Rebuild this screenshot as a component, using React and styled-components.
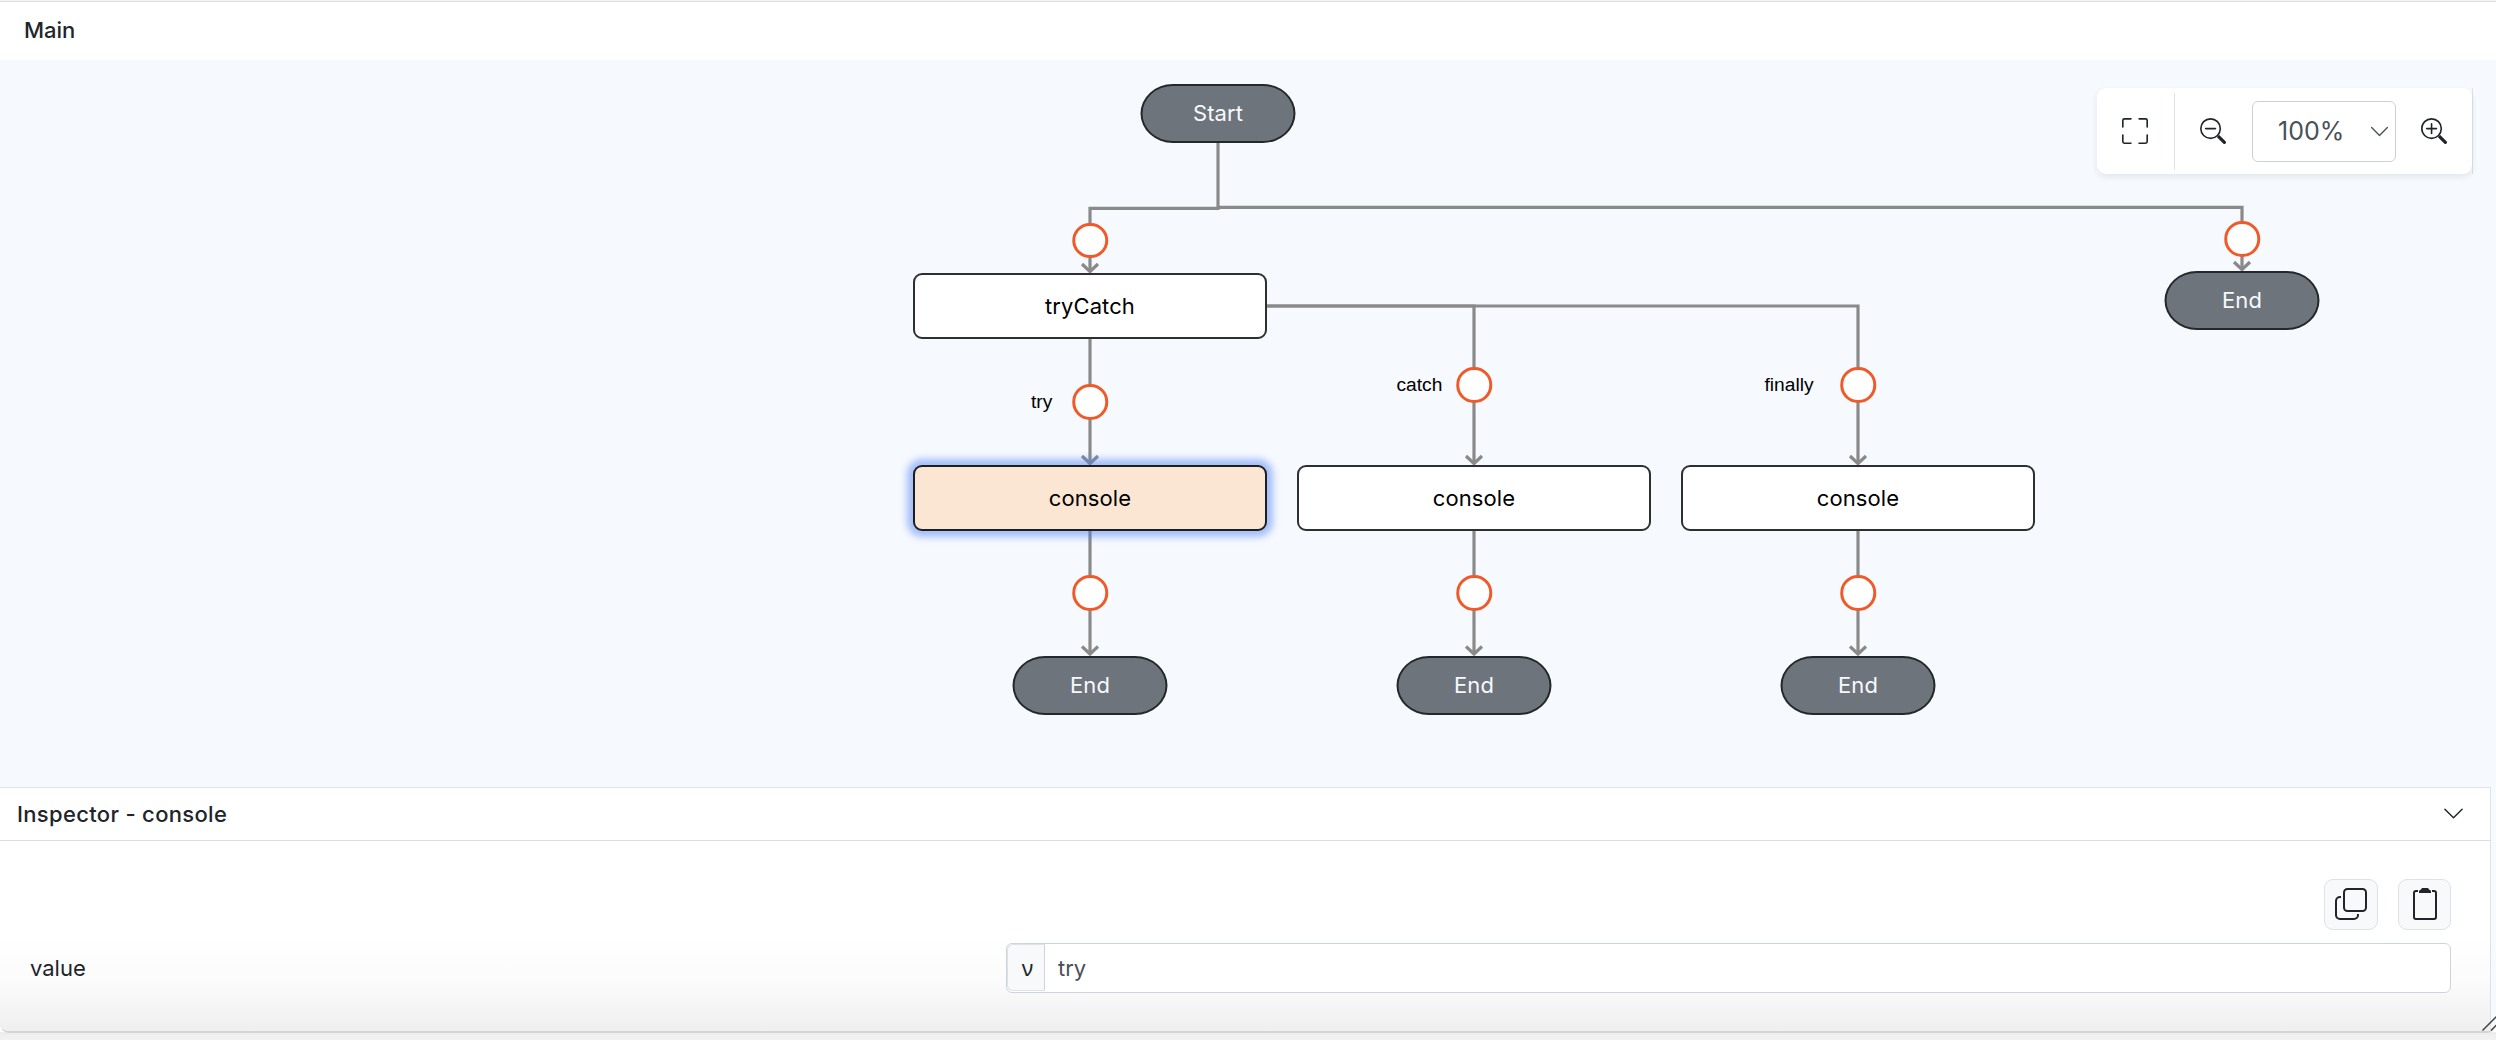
import React from "react";
import styled, { createGlobalStyle } from "styled-components";
import { BsFullscreen, BsZoomOut, BsZoomIn, BsChevronDown } from "react-icons/bs";

const GlobalStyle = createGlobalStyle`
  *, *::before, *::after { box-sizing: border-box; }
  html, body { margin: 0; background: #ededed; }
  body {
    font-family: Inter, "Liberation Sans", sans-serif;
    font-size: 22px;
    color: #212529;
    overflow: hidden;
  }
`;

const Window = styled.div`
  display: flex;
  flex-direction: column;
  width: 2496px;
  height: 1040px;
  background: linear-gradient(#ededed, #f2f2f2) bottom / 100% 8px no-repeat, #fff;
`;

const Frame = styled.div`
  display: flex;
  flex-direction: column;
  height: 1033px;
  border-top: 1px solid #f4f4f4;
  border-bottom: 2px solid #d4d4d4;
  border-radius: 0 0 9px 9px;
  background: #f6f9fe;
  overflow: hidden;
`;

const TitleBar = styled.header`
  flex: none;
  height: 59px;
  padding: 0 24px;
  border-top: 1px solid #dcdfdf;
  background: #fff;
  font-weight: 500;
  font-size: 22px;
  line-height: 56px;
`;

const Canvas = styled.main`
  position: relative;
  flex: none;
  height: 727px;
`;

const EdgeLayer = styled.svg`
  position: absolute;
  inset: 0;
  width: 2496px;
  height: 727px;
`;

const Node = styled.div`
  position: absolute;
  left: ${(p) => p.$x}px;
  top: ${(p) => p.$y}px;
  transform: translate(-50%, 0);
  display: flex;
  align-items: center;
  justify-content: center;
`;

const Terminal = styled(Node)`
  width: 155px;
  height: 59px;
  border: 2px solid #24282b;
  border-radius: 33px / 30px;
  background: #6d747c;
  color: #f6f9fe;
  padding-bottom: 1px;
  letter-spacing: 0.1px;
`;

const Step = styled(Node)`
  width: 354px;
  height: 66px;
  border: 2px solid ${(p) => (p.$selected ? "#1c1e20" : "#2c3033")};
  border-radius: 9px;
  background: ${(p) => (p.$selected ? "#fbe6d4" : "#fff")};
  color: #000;
  padding-bottom: 1px;
  letter-spacing: 0.1px;
  box-shadow: ${(p) => (p.$selected ? "0 0 7px 6px rgba(74, 125, 245, 0.48)" : "none")};
`;

const Port = styled(Node)`
  width: 35.5px;
  height: 35.5px;
  margin-top: -17.75px;
  border: 3px solid #f05a28;
  border-radius: 50%;
  background: #fff;
`;

const BranchLabel = styled.span`
  position: absolute;
  left: ${(p) => p.$x}px;
  top: ${(p) => p.$y}px;
  font: 19.2px/22px "Liberation Sans", Arial, sans-serif;
  color: #000;
`;

const Toolbar = styled.div`
  position: absolute;
  left: 2097px;
  top: 28px;
  display: flex;
  align-items: center;
  width: 376px;
  height: 86px;
  border-right: 1px solid #dee2e6;
  border-radius: 9px 0 0 9px;
`;

const ToolbarSurface = styled.div`
  display: flex;
  align-items: center;
  width: 375px;
  height: 86px;
  border-radius: 9px;
  background: #fff;
  box-shadow: 0 3px 6px rgba(33, 37, 41, 0.09);
`;

const ToolButton = styled.button`
  display: flex;
  align-items: center;
  justify-content: center;
  width: ${(p) => p.$width}px;
  height: 77px;
  padding: 0 1px 0 0;
  border: 0;
  border-right: ${(p) => (p.$divided ? "1px solid #dee2e6" : "0")};
  background: none;
  color: #212529;
  font-size: 26px;
`;

const ZoomSelect = styled.div`
  display: flex;
  align-items: center;
  justify-content: space-between;
  width: 144px;
  height: 61px;
  padding: 0 5px 0 25px;
  border: 1px solid #cdd0d3;
  border-radius: 6px;
  color: #495057;
  font-size: 25px;

  svg { font-size: 21px; }
`;

const Inspector = styled.section`
  display: flex;
  flex-direction: column;
  flex: 1;
  width: 2491px;
  border-top: 1px solid #dee2e6;
  border-right: 1px solid #dee2e6;
  background: linear-gradient(#fff 0, #fff 62%, #fbfbfb 80%, #efefef 100%);
`;

const InspectorHeader = styled.div`
  display: flex;
  align-items: center;
  justify-content: space-between;
  height: 53px;
  padding: 0 25px 1px 17px;
  border-bottom: 1px solid #dcdce4;
  background: #fff;
  font-weight: 500;
  font-size: 22px;
  letter-spacing: 0.32px;

  svg { font-size: 23px; }
`;

const InspectorBody = styled.div`
  display: flex;
  flex-direction: column;
  gap: 13px;
  padding: 38px 39px 0 30px;
`;

const Actions = styled.div`
  display: flex;
  justify-content: flex-end;
  gap: 20px;
`;

const ActionButton = styled.button`
  display: flex;
  align-items: center;
  justify-content: center;
  width: ${(p) => p.$width}px;
  height: 51px;
  padding: 0 0 1px;
  border: 1px solid #dee2e6;
  border-radius: 9px;
  background: #f8f9fa;
  color: #212529;
`;

const Field = styled.div`
  display: grid;
  grid-template-columns: 976px 1fr;
  align-items: center;
`;

const FieldLabel = styled.label`
  padding-bottom: 1px;
`;

const InputGroup = styled.div`
  display: flex;
  height: 50px;
  border: 1px solid #ced4da;
  border-radius: 6px;
  background: #fff;
  overflow: hidden;
`;

const Prefix = styled.span`
  display: flex;
  align-items: center;
  justify-content: center;
  width: 38px;
  padding: 0 0 2px 3px;
  margin-bottom: 1px;
  border: 1px solid #dee2e6;
  border-right: 1px solid #ced4da;
  border-radius: 6px 0 0 6px;
  background: #f8f9fa;
  font-family: "Noto Sans", "Open Sans", sans-serif;
`;

const Value = styled.span`
  padding-left: 13px;
  color: #495057;
  line-height: 48px;
`;

const ResizeGrip = styled.svg`
  position: absolute;
  left: 2480px;
  top: 1014px;
  width: 16px;
  height: 18px;
`;

const CopyIcon = () => (
  <svg width="32" height="32" viewBox="0 0 32 32" fill="none" stroke="currentColor" strokeWidth="2">
    <rect x="9" y="1" width="22" height="22" rx="3.500" />
    <path d="M6 9H5a4 4 0 0 0-4 4v14a4 4 0 0 0 4 4h14a4 4 0 0 0 4-4v-1" />
  </svg>
);

const ClipboardIcon = () => (
  <svg width="24" height="32" viewBox="0 0 24 32" fill="none" stroke="currentColor" strokeWidth="2">
    <path d="M5 3H3a2 2 0 0 0-2 2v24a2 2 0 0 0 2 2h18a2 2 0 0 0 2-2V5a2 2 0 0 0-2-2h-2" />
    <path d="M9 0h6l1 1.500 2 1.200V5H6V2.700l2-1.200z" fill="currentColor" stroke="none" />
  </svg>
);

const edges = [
  "M1218 83V148.300H1090V212",
  "M1218 147.300H2242V210",
  "M1090 279V404",
  "M1267 246H1474V404",
  "M1267 246H1858V404",
  "M1090 471V594",
  "M1474 471V594",
  "M1858 471V594",
];

const arrows = [
  [1090, 212.5], [2242, 210.5],
  [1090, 404.5], [1474, 404.5], [1858, 404.5],
  [1090, 595], [1474, 595], [1858, 595],
];

const ports = [
  [1090, 180.3], [2242, 179],
  [1090, 341.8], [1474, 325], [1858, 325],
  [1090, 533], [1474, 533], [1858, 533],
];

const terminals = [
  { x: 1218, y: 24, label: "Start" },
  { x: 2242, y: 211, label: "End" },
  { x: 1090, y: 595.5, label: "End" },
  { x: 1474, y: 595.5, label: "End" },
  { x: 1858, y: 595.5, label: "End" },
];

const steps = [
  { x: 1090, y: 213, label: "tryCatch" },
  { x: 1090, y: 405, label: "console", selected: true },
  { x: 1474, y: 405, label: "console" },
  { x: 1858, y: 405, label: "console" },
];

const branches = [
  { x: 1031, y: 330.5, label: "try" },
  { x: 1396.5, y: 313.5, label: "catch" },
  { x: 1764.5, y: 313.5, label: "finally" },
];

export default function App() {
  return (
    <>
      <GlobalStyle />
      <Window>
        <Frame>
          <TitleBar>Main</TitleBar>
          <Canvas>
            <EdgeLayer viewBox="0 0 2496 727" fill="none" stroke="#8a8a8a" strokeWidth="3.200">
              {edges.map((d) => <path key={d} d={d} />)}
              {arrows.map(([x, y]) => (
                <path key={`${x}-${y}`} d={`M${x - 8} ${y - 8.5}L${x} ${y - 1}L${x + 8} ${y - 8.5}`} />
              ))}
            </EdgeLayer>
            {terminals.map((n) => <Terminal key={n.x + "-" + n.y} $x={n.x} $y={n.y}>{n.label}</Terminal>)}
            {steps.map((n) => (
              <Step key={n.x + "-" + n.y} $x={n.x} $y={n.y} $selected={n.selected}>{n.label}</Step>
            ))}
            {ports.map(([x, y]) => <Port key={x + "-" + y} $x={x} $y={y} />)}
            {branches.map((b) => <BranchLabel key={b.label} $x={b.x} $y={b.y}>{b.label}</BranchLabel>)}
            <Toolbar>
              <ToolbarSurface>
                <ToolButton $width={78} $divided><BsFullscreen /></ToolButton>
                <ToolButton $width={77}><BsZoomOut /></ToolButton>
                <ZoomSelect>100%<BsChevronDown /></ZoomSelect>
                <ToolButton $width={76}><BsZoomIn /></ToolButton>
              </ToolbarSurface>
            </Toolbar>
          </Canvas>
          <Inspector>
            <InspectorHeader>
              Inspector - console
              <BsChevronDown />
            </InspectorHeader>
            <InspectorBody>
              <Actions>
                <ActionButton $width={54}><CopyIcon /></ActionButton>
                <ActionButton $width={53}><ClipboardIcon /></ActionButton>
              </Actions>
              <Field>
                <FieldLabel>value</FieldLabel>
                <InputGroup>
                  <Prefix>ν</Prefix>
                  <Value>try</Value>
                </InputGroup>
              </Field>
            </InspectorBody>
          </Inspector>
        </Frame>
      </Window>
      <ResizeGrip viewBox="0 0 16 18" fill="none" stroke="#444" strokeWidth="1.500">
        <path d="M2.500 16.500L17 2M11 16.500L17 10.500" />
      </ResizeGrip>
    </>
  );
}
